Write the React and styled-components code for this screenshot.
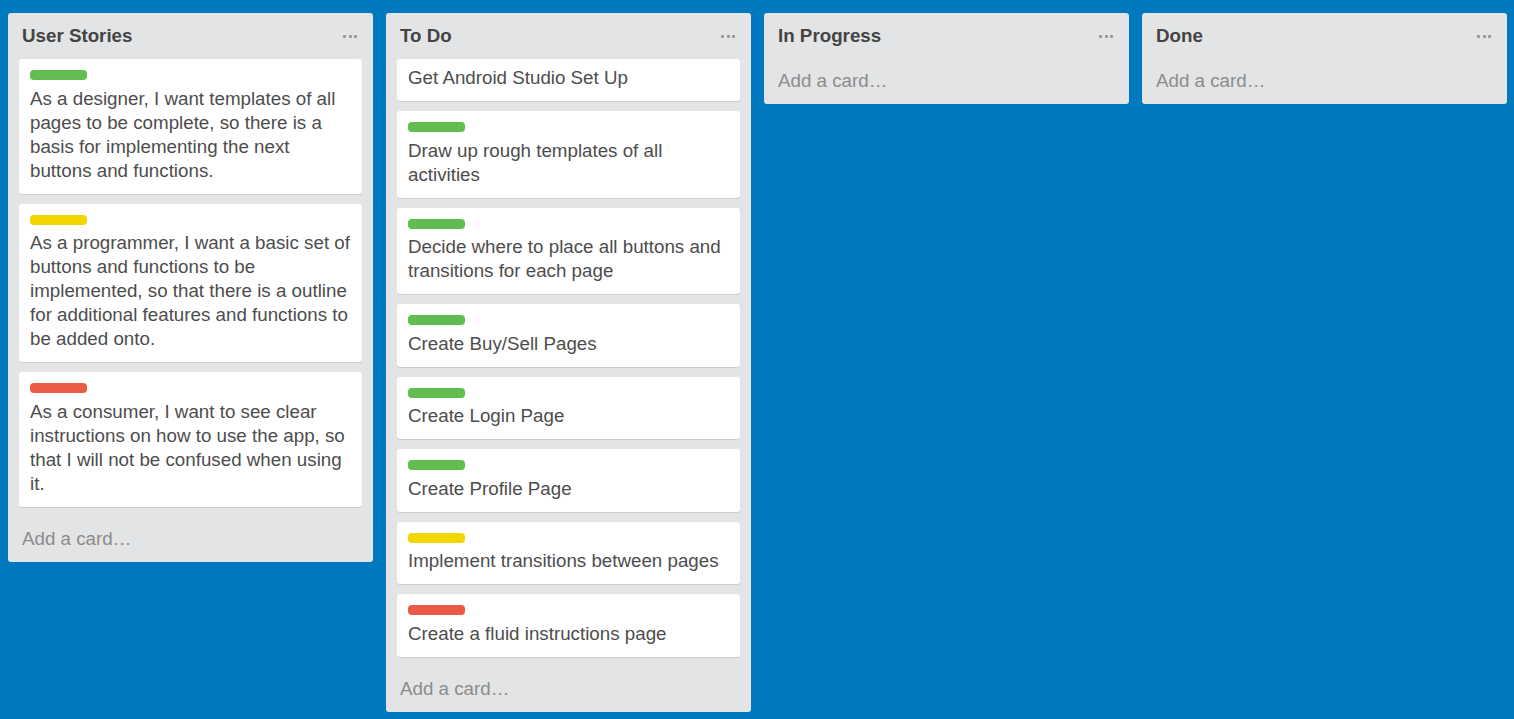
import React from 'react';
import styled, { createGlobalStyle } from 'styled-components';

const GlobalStyle = createGlobalStyle`
  html, body {
    margin: 0;
    padding: 0;
    background: #0079bf;
    height: 100%;
  }
  body {
    font-family: "Liberation Sans", Arial, Helvetica, sans-serif;
    color: #4d4d4d;
  }
`;

const LABELS = {
  green: '#61bd4f',
  yellow: '#f2d600',
  red: '#eb5a46',
};

const lists = [
  {
    title: 'User Stories',
    cards: [
      { label: 'green', text: 'As a designer, I want templates of all pages to be complete, so there is a basis for implementing the next buttons and functions.' },
      { label: 'yellow', text: 'As a programmer, I want a basic set of buttons and functions to be implemented, so that there is a outline for additional features and functions to be added onto.' },
      { label: 'red', text: 'As a consumer, I want to see clear instructions on how to use the app, so that I will not be confused when using it.' },
    ],
  },
  {
    title: 'To Do',
    cards: [
      { text: 'Get Android Studio Set Up' },
      { label: 'green', text: 'Draw up rough templates of all activities' },
      { label: 'green', text: 'Decide where to place all buttons and transitions for each page' },
      { label: 'green', text: 'Create Buy/Sell Pages' },
      { label: 'green', text: 'Create Login Page' },
      { label: 'green', text: 'Create Profile Page' },
      { label: 'yellow', text: 'Implement transitions between pages' },
      { label: 'red', text: 'Create a fluid instructions page' },
    ],
  },
  { title: 'In Progress', cards: [] },
  { title: 'Done', cards: [] },
];

const Board = styled.div`
  display: grid;
  grid-template-columns: repeat(4, 365px);
  gap: 13px;
  align-items: start;
  padding: 13px 8px;
`;

const List = styled.section`
  background: #e2e4e6;
  border-radius: 3px;
  padding: 0 11px;
`;

const Header = styled.div`
  display: flex;
  align-items: center;
  justify-content: space-between;
  height: 46px;
  padding: 0 3px;
  box-sizing: border-box;
`;

const Title = styled.h2`
  margin: 0;
  font-size: 18.75px;
  font-weight: bold;
  color: #444;
`;

const Menu = styled.div`
  display: flex;
  gap: 2.5px;
  padding-right: 2px;
  span {
    width: 3px;
    height: 3px;
    background: #999;
    border-radius: 1px;
  }
`;

const Card = styled.div`
  background: #fff;
  border-radius: 3px;
  box-shadow: 0 1px 0 #ccc;
  padding: 7px 8px 11px 11px;
  margin-bottom: 10px;
`;

const Label = styled.div`
  width: 57px;
  height: 10px;
  border-radius: 4px;
  margin: 4px 0 6.5px;
  background: ${(p) => LABELS[p.color]};
`;

const Text = styled.div`
  font-size: 18.75px;
  line-height: 24px;
  color: #4d4d4d;
`;

const AddCard = styled.div`
  font-size: 18.75px;
  line-height: 24px;
  color: #8c8c8c;
  padding: 10px 3px 11px;
`;

export default function App() {
  return (
    <>
      <GlobalStyle />
      <Board>
        {lists.map((list) => (
          <List key={list.title}>
            <Header>
              <Title>{list.title}</Title>
              <Menu>
                <span />
                <span />
                <span />
              </Menu>
            </Header>
            {list.cards.map((card, i) => (
              <Card key={i}>
                {card.label && <Label color={card.label} />}
                <Text>{card.text}</Text>
              </Card>
            ))}
            <AddCard>Add a card…</AddCard>
          </List>
        ))}
      </Board>
    </>
  );
}
